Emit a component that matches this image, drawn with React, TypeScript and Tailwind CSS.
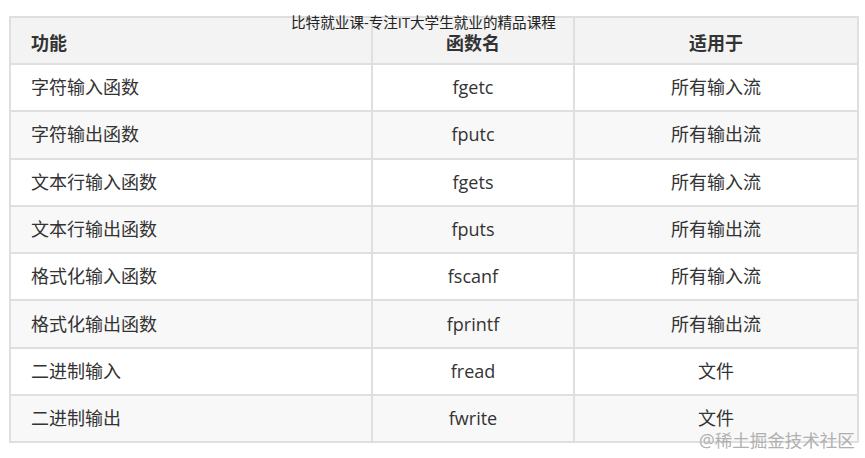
const rows = [
  ["字符输入函数", "fgetc", "所有输入流"],
  ["字符输出函数", "fputc", "所有输出流"],
  ["文本行输入函数", "fgets", "所有输入流"],
  ["文本行输出函数", "fputs", "所有输出流"],
  ["格式化输入函数", "fscanf", "所有输入流"],
  ["格式化输出函数", "fprintf", "所有输出流"],
  ["二进制输入", "fread", "文件"],
  ["二进制输出", "fwrite", "文件"],
];

const App = () => {
  return (
    <div
      className="relative w-[865px] h-[458px] bg-white overflow-hidden"
      style={{ fontFamily: '"Open Sans", "Noto Sans CJK SC", sans-serif' }}
    >
      <div className="pl-[9px] pt-[16px]">
        <table className="w-[848px] border-collapse text-[18px] text-[#333] table-fixed">
          <colgroup>
            <col className="w-[362px]" />
            <col className="w-[202px]" />
            <col className="w-[284px]" />
          </colgroup>
          <thead>
            <tr className="h-[47px] bg-[#f3f3f3]">
              <th className="border-2 border-[#dfdfdf] text-left pl-[20px] pt-[6px] font-bold">功能</th>
              <th className="border-2 border-[#dfdfdf] text-center pt-[6px] font-bold">函数名</th>
              <th className="border-2 border-[#dfdfdf] text-center pt-[6px] font-bold">适用于</th>
            </tr>
          </thead>
          <tbody>
            {rows.map((r, i) => (
              <tr key={i} className={`h-[47.3px] ${i % 2 === 1 ? "bg-[#f8f8f8]" : "bg-white"}`}>
                <td className="border-2 border-[#dfdfdf] pl-[20px]">{r[0]}</td>
                <td className="border-2 border-[#dfdfdf] text-center">{r[1]}</td>
                <td className="border-2 border-[#dfdfdf] text-center">{r[2]}</td>
              </tr>
            ))}
          </tbody>
        </table>
      </div>

      {/* 水印 */}
      <div className="absolute left-[291px] top-[13px] text-[14.6px] leading-[18px] text-[#222] whitespace-nowrap">
        比特就业课-专注IT大学生就业的精品课程
      </div>
      <div className="absolute left-[699px] top-[428px] text-[17.5px] leading-[24px] text-[#b0b0b0] whitespace-nowrap">
        @稀土掘金技术社区
      </div>
    </div>
  );
};

export default App;
